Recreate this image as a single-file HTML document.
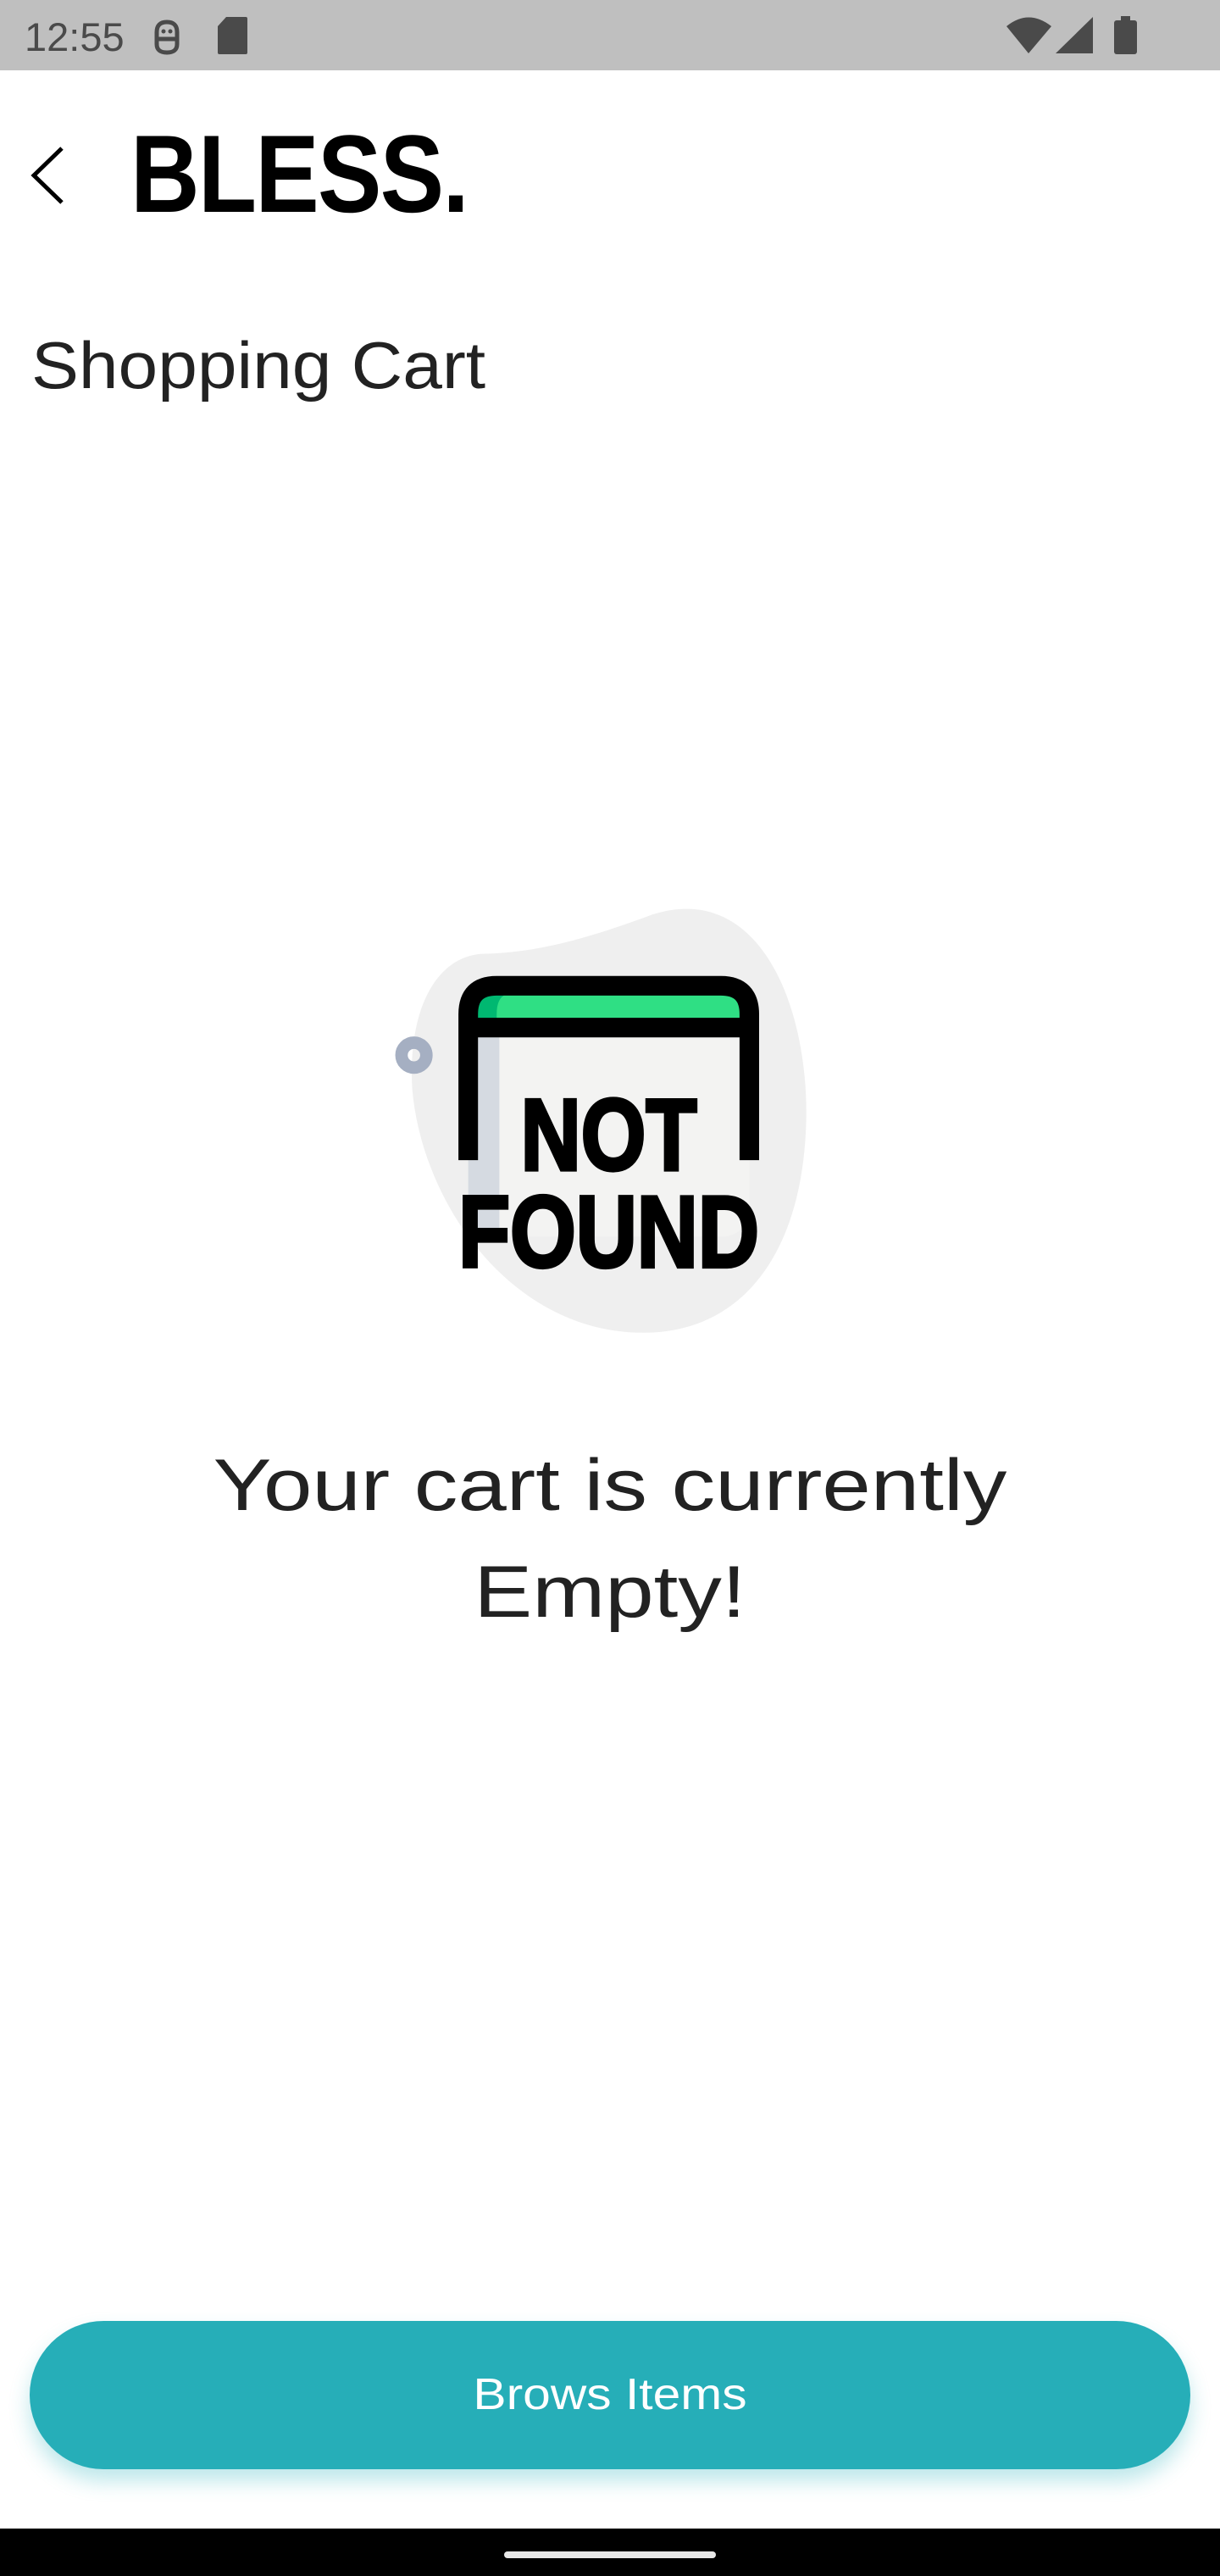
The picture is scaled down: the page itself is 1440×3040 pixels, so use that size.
<!DOCTYPE html>
<html><head><meta charset="utf-8"><style>
html,body{margin:0;padding:0;background:#fff;}
body{width:1440px;height:3040px;position:relative;overflow:hidden;font-family:"Liberation Sans",sans-serif;}
.abs{position:absolute;}
</style></head><body>
<div class="abs" style="left:0;top:0;width:1440px;height:83px;background:#bfbfbf;"></div>
<div class="abs" style="left:29px;top:14px;font-size:47px;color:#4a4a4a;line-height:60px;">12:55</div>
<svg class="abs" style="left:0;top:0" width="1440" height="83">
  <g fill="none" stroke="#4a4a4a" stroke-width="5">
    <path d="M185 38 Q185 26 197 26 Q209 26 209 38 V52 Q209 62 197 62 Q185 62 185 52 Z"/>
    <path d="M185 46 H209"/>
  </g>
  <circle cx="193" cy="37" r="2.5" fill="#4a4a4a"/><circle cx="201" cy="37" r="2.5" fill="#4a4a4a"/>
  <path d="M267 20 H290 Q292 20 292 22 V62 Q292 64 290 64 H259 Q257 64 257 62 V31 Z" fill="#4a4a4a"/>
  <path d="M1188 31 Q1214 10 1241 31 L1214 63 Z" fill="#4a4a4a"/>
  <path d="M1246 63 L1290 20 V63 Z" fill="#4a4a4a"/>
  <rect x="1315" y="24" width="27" height="40" rx="3" fill="#4a4a4a"/>
  <rect x="1323" y="19" width="11" height="6" fill="#4a4a4a"/>
</svg>
<svg class="abs" style="left:0;top:0" width="120" height="260"><path d="M73 175 L40 207 L73 239" fill="none" stroke="#000" stroke-width="5"/></svg>
<div class="abs" style="left:154px;top:130px;font-size:130px;font-weight:bold;line-height:150px;transform:scaleX(0.87);transform-origin:left top;color:#000;letter-spacing:-2px;">BLESS.</div>
<div class="abs" style="left:37px;top:381px;font-size:78px;line-height:100px;color:#222;transform:scaleX(1.075);transform-origin:left top;">Shopping Cart</div>
<svg class="abs" style="left:0;top:0" width="1440" height="1700">
 <g transform="translate(-6 0) translate(440 1052) scale(1.05) translate(-440 -1052)">
  <path d="M573 1122 C640 1120 700 1100 760 1078 C880 1040 935 1180 933 1307 C930 1460 860 1548 750 1548 C600 1548 500 1400 490 1273 C485 1180 520 1122 573 1122 Z" fill="#efefef"/>
  <rect x="553" y="1160" width="316" height="280" rx="30" fill="#f3f3f2"/>
  <rect x="553" y="1215" width="35" height="222" fill="#d5dae1"/>
  <path d="M563 1195 V1185 Q563 1168 580 1168 H842 Q859 1168 859 1185 V1195 Z" fill="#2fdf84"/>
  <path d="M563 1195 V1185 Q563 1168 580 1168 H595 Q585 1172 585 1190 V1195 Z" fill="#00b871"/>
  <path d="M553 1354 V1190 Q553 1158 585 1158 H837 Q869 1158 869 1190 V1354 M553 1205 H869" fill="none" stroke="#000" stroke-width="22"/>
  <circle cx="492" cy="1236" r="14" fill="none" stroke="#a5afc2" stroke-width="14"/>
  <text x="612" y="1365" font-family="Liberation Sans" font-weight="bold" font-size="114" textLength="198" lengthAdjust="spacingAndGlyphs" stroke="#000" stroke-width="4">NOT</text>
  <text x="542" y="1474" font-family="Liberation Sans" font-weight="bold" font-size="114" textLength="338" lengthAdjust="spacingAndGlyphs" stroke="#000" stroke-width="4">FOUND</text>
 </g>
</svg>
<div class="abs" style="left:0;top:1690px;width:1440px;text-align:center;font-size:86px;line-height:126px;color:#222;transform:scaleX(1.2);transform-origin:720px 0;">Your cart is currently<br>Empty!</div>
<div class="abs" style="left:35px;top:2739px;width:1370px;height:175px;border-radius:88px;background:#26aeb8;box-shadow:0 14px 24px rgba(38,174,184,0.3);"></div>
<div class="abs" style="left:0;top:2739px;width:1440px;height:175px;color:#fff;font-size:52px;line-height:175px;text-align:center;transform:scaleX(1.13);transform-origin:720px 0;">Brows Items</div>
<div class="abs" style="left:0;top:2984px;width:1440px;height:56px;background:#000;"></div>
<div class="abs" style="left:595px;top:3011px;width:250px;height:8px;border-radius:4px;background:#e8e8e8;"></div>
</body></html>
